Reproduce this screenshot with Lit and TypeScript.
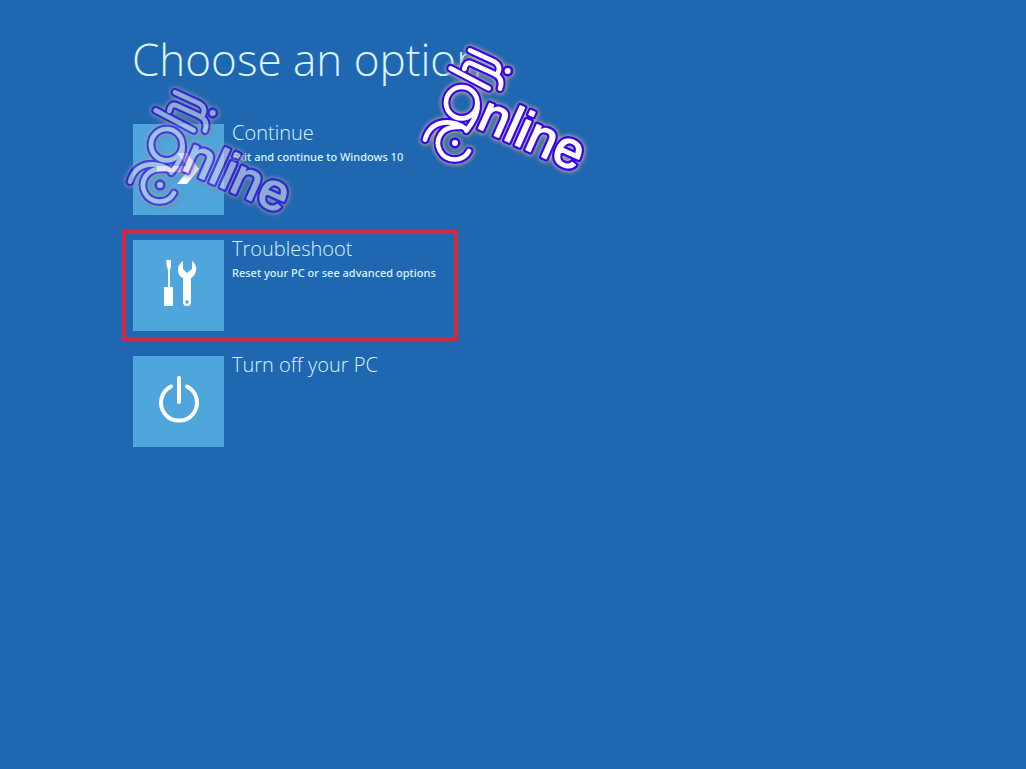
import { LitElement, html, css, svg } from "lit";
import { customElement, property } from "lit/decorators.js";
import { classMap } from "lit/directives/class-map.js";

const strokes = [
  "M180 46L247 77Q275 89 264 113",
  "M163 102Q168 77 186 86L250 115Q282 129 270 161",
  "M122 100L236 160",
  "M155 156A47 47 0 1 0 155 250A47 47 0 1 0 155 156",
  "M202 203Q208 238 169 287",
  "M45 314Q60 262 112 262Q140 262 165 280",
  "M150 276C90 270 74 318 90 348C108 382 160 382 177 348",
];

@customElement("brand-mark")
export class BrandMark extends LitElement {
  static styles = css`
    :host {
      --core: #fff;
      display: block;
      pointer-events: none;
    }
    svg {
      display: block;
      width: 190px;
      height: 145px;
      overflow: visible;
      filter: drop-shadow(0 0 2px #c9c6ae) drop-shadow(1px 1px 2px #5c748c);
    }
    path {
      fill: none;
      stroke-linecap: round;
      stroke-linejoin: round;
    }
    .edge {
      fill: #3a06e8;
      stroke: #3a06e8;
    }
    .core {
      fill: var(--core);
      stroke: var(--core);
    }
    circle {
      stroke: none;
    }
    .edge path {
      stroke-width: 27;
    }
    .core path {
      stroke-width: 14;
    }
    text {
      font: 156px "Liberation Sans", Arial, sans-serif;
      stroke-width: 4;
      stroke-linejoin: round;
    }
    .edge text {
      stroke-width: 18;
    }
  `;

  render() {
    const layer = (name: string, dot: number) => svg`
      <g class=${name}>
        <circle cx="293" cy="108" r=${dot}></circle>
        ${strokes.map((d) => svg`<path d=${d}></path>`)}
        <circle cx="135" cy="324" r=${dot}></circle>
        <text transform="translate(196 276) rotate(24)" aria-hidden=${name === "edge"}>nline</text>
      </g>`;
    return html`<svg viewBox="0 0 570 435">${layer("edge", 17)}${layer("core", 9)}</svg>`;
  }
}

const icons = {
  arrow: svg`<path d="M24 42H54L44 29H54L66 45L54 60H44L54 48H24Z"></path>`,
  tools: svg`
    <path d="M33 20H38V27L37 30V47H40V66H31V47H35V30L34 27Z"></path>
    <path d="M50 21V29L54 33L59 29V21Q64 24 63 31Q62 36 58 38V62Q58 66 54 66Q50 66 50 62V38Q45 36 45 30Q45 24 50 21Z"></path>
    <circle class="hole" cx="54" cy="62" r="1.7"></circle>`,
  power: svg`
    <path class="line" d="M38 30.500A18 18 0 1 0 54 30.500"></path>
    <path class="line" d="M46 22V46"></path>`,
};

interface Option {
  title: string;
  note?: string;
  icon: keyof typeof icons;
  marked?: boolean;
}

@customElement("option-button")
export class OptionButton extends LitElement {
  static styles = css`
    :host {
      display: block;
    }
    button {
      display: flex;
      gap: 8px;
      align-items: flex-start;
      width: 100%;
      margin: 0;
      padding: 6px 7px;
      border: 4px solid transparent;
      border-radius: 2px;
      background: none;
      color: #d9f3fb;
      text-align: left;
      cursor: pointer;
    }
    .marked {
      border-color: #cf2a3f;
    }
    svg {
      flex: none;
      width: 91px;
      height: 91px;
      background: #4fa6dc;
      fill: #fff;
    }
    .hole {
      fill: #4fa6dc;
    }
    .line {
      fill: none;
      stroke: #fff;
      stroke-width: 4;
      stroke-linecap: round;
    }
    .text {
      display: grid;
      gap: 7px;
    }
    .title {
      font: 300 20px/18px "Open Sans", "Segoe UI", sans-serif;
    }
    .note {
      font: 500 11px/16px "Noto Sans", "Segoe UI", sans-serif;
    }
  `;

  @property({ attribute: false }) option!: Option;

  render() {
    const { title, note, icon, marked } = this.option;
    return html`<button type="button" class=${classMap({ marked: !!marked })}>
      <svg viewBox="0 0 91 91" aria-hidden="true">${icons[icon]}</svg>
      <span class="text">
        <span class="title">${title}</span>
        ${note ? html`<span class="note">${note}</span>` : null}
      </span>
    </button>`;
  }
}

@customElement("app-root")
export class AppRoot extends LitElement {
  static styles = css`
    :host {
      display: block;
      position: relative;
      box-sizing: border-box;
      min-height: 100vh;
      padding: 29px 24px 24px 122px;
      background: #2067b2;
    }
    h1 {
      margin: 0 0 25px;
      padding-left: 10px;
      color: #dcf5fc;
      font: 300 44px/60px "Open Sans", "Segoe UI", sans-serif;
    }
    .options {
      display: grid;
      gap: 5px;
      max-width: 336px;
    }
    brand-mark {
      position: absolute;
      left: 410px;
      top: 35px;
    }
    .faded {
      --core: #cdd4e4;
      left: 115px;
      top: 77px;
      opacity: 0.64;
    }
  `;

  private options: Option[] = [
    { title: "Continue", note: "Exit and continue to Windows 10", icon: "arrow" },
    { title: "Troubleshoot", note: "Reset your PC or see advanced options", icon: "tools", marked: true },
    { title: "Turn off your PC", icon: "power" },
  ];

  render() {
    return html`
      <h1>Choose an option</h1>
      <div class="options">
        ${this.options.map((o) => html`<option-button .option=${o}></option-button>`)}
      </div>
      <brand-mark></brand-mark>
      <brand-mark class="faded"></brand-mark>
    `;
  }
}
